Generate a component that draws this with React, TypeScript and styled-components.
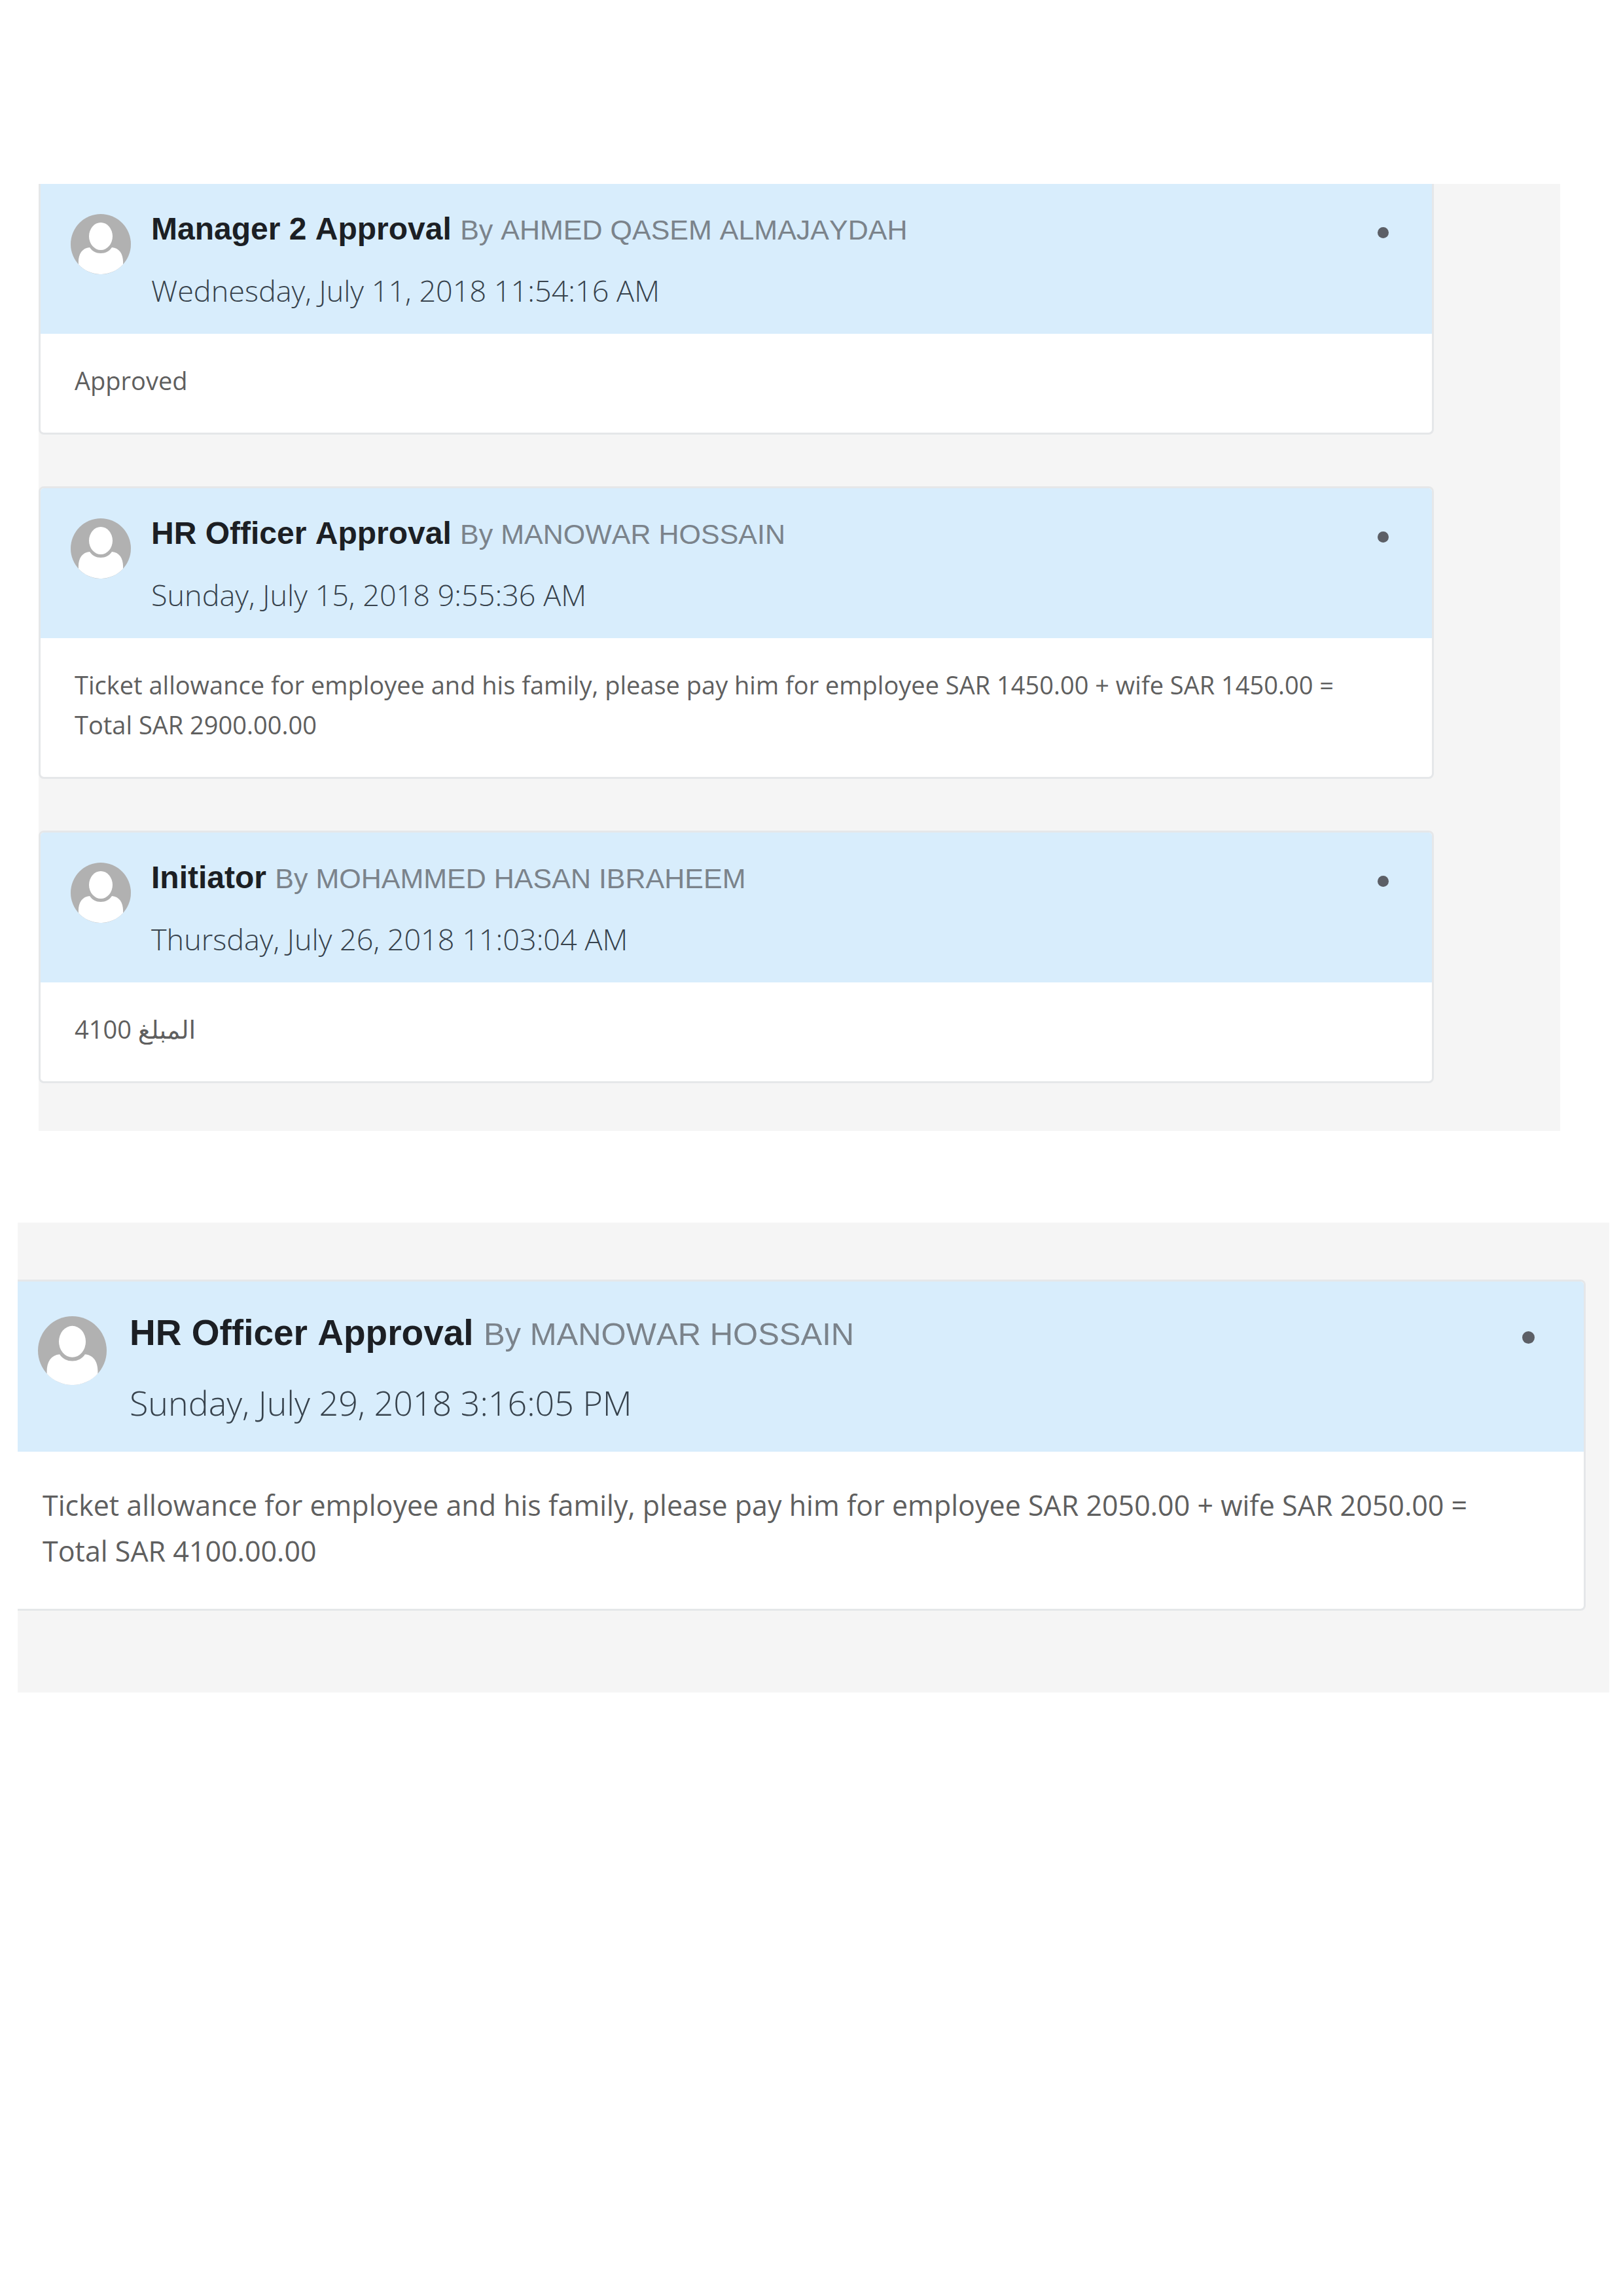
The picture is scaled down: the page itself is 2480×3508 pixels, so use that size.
import React from "react";
import styled, { createGlobalStyle, css, ThemeProvider } from "styled-components";

const GlobalStyle = createGlobalStyle`
  *, *::before, *::after { box-sizing: border-box; }
  body { margin: 0; background: #ffffff; }
`;

const regular = {
  title: 48, by: 43, date: 45, body: 38, line: 61,
  avatar: 92, avatarTop: 46, padLeft: 46, gap: 31, padTop: 38, headHeight: 232,
  titleLine: 62, dateLine: 64, dateGap: 30,
  bodyLeft: 52, bodyTop: 41, bodyBottom: 49,
  dot: 17, dotTop: 66, dotRight: 66,
};

const large = {
  title: 55, by: 49, date: 52, body: 43, line: 70,
  avatar: 105, avatarTop: 53, padLeft: 31, gap: 35, padTop: 43, headHeight: 263,
  titleLine: 70, dateLine: 72, dateGap: 34,
  bodyLeft: 38, bodyTop: 47, bodyBottom: 53,
  dot: 19, dotTop: 76, dotRight: 75,
};

const Page = styled.main`
  padding-top: 281px;
  color: #222;
  font-family: "Open Sans", "Noto Sans", "DejaVu Sans", sans-serif;
`;

const Panel = styled.section<{ $wide?: boolean }>`
  display: flex;
  flex-direction: column;
  gap: 79px;
  background: #f5f5f5;
  ${(p) =>
    p.$wide
      ? css`
          margin: 140px 21px 0 27px;
          padding: 87px 36px 125px 0;
        `
      : css`
          margin: 0 96px 0 59px;
          padding: 0 193px 73px 0;
        `}
`;

const Card = styled.article<{ $cutTop?: boolean; $cutLeft?: boolean }>`
  background: #fff;
  border: 3px solid #e5e7e9;
  border-radius: 8px;
  overflow: hidden;
  ${(p) => p.$cutTop && css`border-top: 0; border-top-left-radius: 0; border-top-right-radius: 0;`}
  ${(p) => p.$cutLeft && css`border-left: 0; border-top-left-radius: 0; border-bottom-left-radius: 0;`}
`;

const CardHeader = styled.header`
  display: flex;
  align-items: flex-start;
  gap: ${(p) => p.theme.gap}px;
  height: ${(p) => p.theme.headHeight - 3}px;
  padding: 0 ${(p) => p.theme.dotRight}px 0 ${(p) => p.theme.padLeft}px;
  background: #d8edfc;
`;

const Avatar = styled.svg`
  flex: none;
  width: ${(p) => p.theme.avatar}px;
  height: ${(p) => p.theme.avatar}px;
  margin-top: ${(p) => p.theme.avatarTop}px;
`;

const Heading = styled.div`
  flex: 1;
  padding-top: ${(p) => p.theme.padTop}px;
`;

const Title = styled.h2`
  margin: 0;
  font: 700 ${(p) => p.theme.title}px/${(p) => p.theme.titleLine}px "Liberation Sans", Arial, sans-serif;
  font-kerning: none;
  color: #1c1f24;
`;

const Author = styled.span`
  font-size: ${(p) => p.theme.by}px;
  font-weight: 400;
  color: #7b838b;
`;

const Stamp = styled.time`
  display: block;
  margin-top: ${(p) => p.theme.dateGap}px;
  font-size: ${(p) => p.theme.date}px;
  font-weight: 300;
  line-height: ${(p) => p.theme.dateLine}px;
  color: #37424c;
`;

const MenuButton = styled.button`
  flex: none;
  width: ${(p) => p.theme.dot}px;
  height: ${(p) => p.theme.dot}px;
  margin-top: ${(p) => p.theme.dotTop}px;
  padding: 0;
  border: 0;
  border-radius: 50%;
  background: #5c5f66;
  cursor: pointer;
`;

const Comment = styled.p`
  margin: 0;
  padding: ${(p) => p.theme.bodyTop}px ${(p) => p.theme.bodyLeft}px ${(p) => p.theme.bodyBottom}px;
  font-size: ${(p) => p.theme.body}px;
  line-height: ${(p) => p.theme.line}px;
  color: #5f5f5f;
  white-space: pre-line;
`;

type Entry = {
  stage: string;
  author: string;
  date: string;
  comment: string;
  cutTop?: boolean;
  cutLeft?: boolean;
};

const history: Entry[] = [
  {
    stage: "Manager 2 Approval",
    author: "AHMED QASEM ALMAJAYDAH",
    date: "Wednesday, July 11, 2018 11:54:16 AM",
    comment: "Approved",
    cutTop: true,
  },
  {
    stage: "HR Officer Approval",
    author: "MANOWAR HOSSAIN",
    date: "Sunday, July 15, 2018 9:55:36 AM",
    comment:
      "Ticket allowance for employee and his family, please pay him for employee SAR 1450.00 + wife SAR 1450.00 =\nTotal SAR 2900.00.00",
  },
  {
    stage: "Initiator",
    author: "MOHAMMED HASAN IBRAHEEM",
    date: "Thursday, July 26, 2018 11:03:04 AM",
    comment: "المبلغ 4100",
  },
];

const latest: Entry = {
  stage: "HR Officer Approval",
  author: "MANOWAR HOSSAIN",
  date: "Sunday, July 29, 2018 3:16:05 PM",
  comment:
    "Ticket allowance for employee and his family, please pay him for employee SAR 2050.00 + wife SAR 2050.00 =\nTotal SAR 4100.00.00",
  cutLeft: true,
};

function Person() {
  return (
    <Avatar viewBox="0 0 92 92" aria-hidden="true">
      <circle cx="46" cy="46" r="46" fill="#b1b1b1" />
      <path
        d="M12 77C11 62 17 52 29 51C33 57 39 60 46 60C53 60 59 57 63 51C75 52 81 62 80 77A46 46 0 0 1 12 77Z"
        fill="#fff"
      />
      <ellipse cx="46" cy="34" rx="18" ry="21" fill="#fff" />
    </Avatar>
  );
}

function ApprovalCard({ entry }: { entry: Entry }) {
  return (
    <Card $cutTop={entry.cutTop} $cutLeft={entry.cutLeft}>
      <CardHeader>
        <Person />
        <Heading>
          <Title>
            {entry.stage} <Author>By {entry.author}</Author>
          </Title>
          <Stamp>{entry.date}</Stamp>
        </Heading>
        <MenuButton type="button" aria-label="Options" />
      </CardHeader>
      <Comment>{entry.comment}</Comment>
    </Card>
  );
}

export default function App() {
  return (
    <Page>
      <GlobalStyle />
      <ThemeProvider theme={regular}>
        <Panel>
          {history.map((entry) => (
            <ApprovalCard key={entry.date} entry={entry} />
          ))}
        </Panel>
      </ThemeProvider>
      <ThemeProvider theme={large}>
        <Panel $wide>
          <ApprovalCard entry={latest} />
        </Panel>
      </ThemeProvider>
    </Page>
  );
}
